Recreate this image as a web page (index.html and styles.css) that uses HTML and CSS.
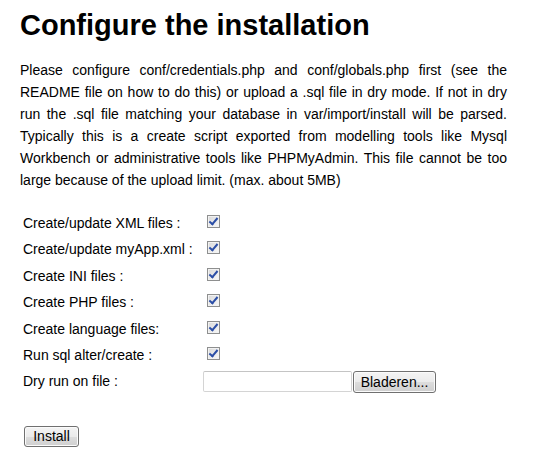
FILE: index.html
```html
<!DOCTYPE html>
<html>
<head>
<meta charset="utf-8">
<title>Configure the installation</title>
<link rel="stylesheet" href="styles.css">
</head>
<body>
<div class="page">
  <h1 class="title">Configure the installation</h1>
  <p class="intro">Please configure conf/credentials.php and conf/globals.php first (see the README file on how to do this) or upload a .sql file in dry mode. If not in dry run the .sql file matching your database in var/import/install will be parsed. Typically this is a create script exported from modelling tools like Mysql Workbench or administrative tools like PHPMyAdmin. This file cannot be too large because of the upload limit. (max. about 5MB)</p>
  <form class="form">
    <div class="rows">
      <label class="lbl" for="c1">Create/update XML files :</label>
      <div class="field"><input class="cb" type="checkbox" id="c1" checked></div>
      <label class="lbl" for="c2">Create/update myApp.xml :</label>
      <div class="field"><input class="cb" type="checkbox" id="c2" checked></div>
      <label class="lbl" for="c3">Create INI files :</label>
      <div class="field"><input class="cb" type="checkbox" id="c3" checked></div>
      <label class="lbl" for="c4">Create PHP files :</label>
      <div class="field"><input class="cb" type="checkbox" id="c4" checked></div>
      <label class="lbl" for="c5">Create language files:</label>
      <div class="field"><input class="cb" type="checkbox" id="c5" checked></div>
      <label class="lbl" for="c6">Run sql alter/create :</label>
      <div class="field"><input class="cb" type="checkbox" id="c6" checked></div>
      <label class="lbl" for="f1">Dry run on file :</label>
      <div class="field file-field">
        <span class="file-box" id="f1"></span>
        <button type="button" class="btn browse">Bladeren...</button>
      </div>
    </div>
    <div class="actions">
      <button type="button" class="btn install">Install</button>
    </div>
  </form>
</div>
</body>
</html>
```

FILE: styles.css
```css
html, body {
  margin: 0;
  padding: 0;
  background: #ffffff;
}

body {
  font-family: "Liberation Sans", Arial, sans-serif;
  color: #000000;
}

.page {
  padding: 7px 0 0 20px;
}

.title {
  margin: 0;
  font-size: 29px;
  line-height: 37px;
  font-weight: bold;
}

.intro {
  margin: 15px 0 0 0;
  width: 487px;
  font-size: 14px;
  line-height: 22px;
  text-align: justify;
}

.form {
  margin: 19px 0 0 0;
}

.rows {
  display: grid;
  grid-template-columns: 180px auto;
  grid-auto-rows: 26.4px;
  padding-left: 3px;
}

.lbl {
  font-size: 14px;
  line-height: 26.4px;
  white-space: nowrap;
}

.field {
  display: flex;
  align-items: flex-start;
}

.cb {
  appearance: none;
  -webkit-appearance: none;
  position: relative;
  box-sizing: border-box;
  width: 13px;
  height: 13px;
  margin: 5px 0 0 4px;
  border: 1px solid #8e8f8f;
  background: linear-gradient(135deg, #d8d8d8 0%, #ececec 60%, #f8f8f8 100%);
  box-shadow: inset 0 0 0 1px #f2f2f2;
}

.cb:checked::after {
  content: "";
  position: absolute;
  left: 3px;
  top: 0px;
  width: 3px;
  height: 7px;
  border-right: 2px solid #2b4ea6;
  border-bottom: 2px solid #2b4ea6;
  transform: rotate(40deg);
}

.file-field {
  align-items: center;
  gap: 1px;
}

.file-box {
  display: block;
  box-sizing: border-box;
  width: 149px;
  height: 21px;
  border: 1px solid #d4d4d4;
  border-top-color: #c4c4c4;
  border-radius: 2px;
  background: #ffffff;
}

.btn {
  box-sizing: border-box;
  font-family: "Liberation Sans", Arial, sans-serif;
  font-size: 14px;
  color: #000000;
  border: 1px solid #707070;
  border-radius: 3px;
  background: linear-gradient(#f4f4f4 0%, #ebebeb 50%, #dddddd 51%, #cfcfcf 100%);
  box-shadow: inset 0 0 0 1px #fbfbfb;
  padding: 0;
  margin: 0;
  line-height: 18px;
}

.browse {
  width: 83px;
  height: 22px;
}

.actions {
  margin-top: 31px;
  padding-left: 4px;
}

.install {
  width: 55px;
  height: 21px;
}
```
